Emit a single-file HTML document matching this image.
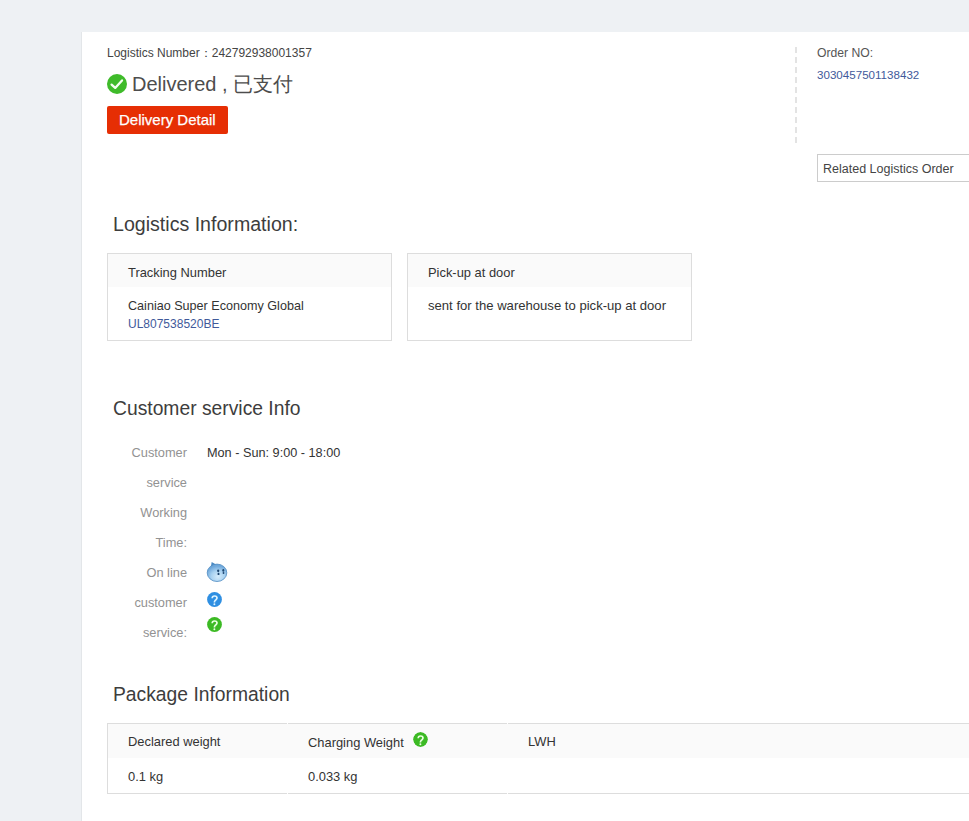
<!DOCTYPE html>
<html><head><meta charset="utf-8">
<style>
*{margin:0;padding:0;box-sizing:border-box}
html,body{width:969px;height:821px;overflow:hidden;background:#eef1f4;font-family:"Liberation Sans",sans-serif;color:#333}
.panel{position:absolute;left:82px;top:32px;width:900px;height:800px;background:#fff;box-shadow:-1px 0 0 #e3e6e9}
.a{position:absolute;white-space:nowrap;line-height:1}
.lnum{left:107px;top:47px;font-size:12px;color:#444}
.status{left:132px;top:74px;font-size:20px;color:#4d4d4d}
.chk{position:absolute;left:107px;top:74px;width:20px;height:20px;border-radius:50%;background:#3fbb2a}
.btn{position:absolute;left:107px;top:106px;width:121px;height:28px;border-radius:2px;background:#e62e04;color:#fff;font-size:15px;line-height:28px;padding-left:12px;-webkit-text-stroke:0.25px #fff;white-space:nowrap}
.dash{position:absolute;left:795px;top:47px;width:2px;height:97px;background:repeating-linear-gradient(to bottom,#e3e3e3 0 6px,transparent 6px 10px)}
.ordl{left:817px;top:47px;font-size:12.2px;color:#555}
.ordn{left:817px;top:69px;font-size:11.6px;color:#3f5a9b}
.rel{position:absolute;left:817px;top:154px;width:170px;height:28px;border:1px solid #ccc;font-size:12.5px;color:#444;line-height:28px;padding-left:5px;white-space:nowrap}
.h{font-size:19.3px;color:#3d3d3d}
.card{position:absolute;top:253px;width:285px;height:88px;border:1px solid #ddd}
.card .hd{height:33px;background:#fafafa;font-size:12.9px;padding:13px 0 0 20px;line-height:1}
.card .bd{font-size:12.6px;padding:10px 0 0 20px;line-height:18px}
.blue{color:#3f5a9b}
.lab{position:absolute;left:100px;width:87px;text-align:right;font-size:12.8px;color:#929292;line-height:1}
.val{font-size:12.7px;color:#333}
.tbl{position:absolute;left:107px;top:723px;width:900px;height:71px;border:1px solid #ddd;border-right:none}
.thd{position:absolute;left:0;top:0;width:100%;height:34px;background:#fafafa}
.brk{position:absolute;width:1px;height:1px;background:#fff;margin-top:-1px}
.tx{font-size:12.9px;color:#333}
.q{position:absolute;width:15px;height:15px;border-radius:50%}
</style></head><body>
<div class="panel"></div>

<div class="a lnum" id="lnum">Logistics Number：242792938001357</div>
<svg style="position:absolute;left:107px;top:74px" width="20" height="20" viewBox="0 0 20 20"><circle cx="10" cy="10" r="10" fill="#3fbb2a"/><path d="M4.6 10.6 L8.2 13.9 L15 6.4" fill="none" stroke="#f4fff0" stroke-width="2.3" stroke-linecap="round" stroke-linejoin="round"/></svg>
<div class="a status" id="status">Delivered , 已支付</div>
<div class="btn" id="btn">Delivery Detail</div>

<div class="dash"></div>
<div class="a ordl" id="ordl">Order NO:</div>
<div class="a ordn" id="ordn">3030457501138432</div>
<div class="rel" id="rel">Related Logistics Order</div>

<div class="a h" id="h1" style="left:113px;top:215px;font-size:19.6px">Logistics Information:</div>
<div class="card" style="left:107px">
  <div class="hd" id="c1h">Tracking Number</div>
  <div class="bd" id="c1b">Cainiao Super Economy Global<br><span class="blue" style="font-size:12px">UL807538520BE</span></div>
</div>
<div class="card" style="left:407px">
  <div class="hd" id="c2h">Pick-up at door</div>
  <div class="bd" id="c2b" style="font-size:13.1px">sent for the warehouse to pick-up at door</div>
</div>

<div class="a h" id="h2" style="left:113px;top:399px">Customer service Info</div>
<div class="lab" style="top:447px">Customer</div>
<div class="lab" style="top:477px">service</div>
<div class="lab" style="top:507px">Working</div>
<div class="lab" style="top:537px">Time:</div>
<div class="lab" style="top:567px">On line</div>
<div class="lab" style="top:597px">customer</div>
<div class="lab" style="top:627px">service:</div>
<div class="a val" id="val" style="left:207px;top:447px">Mon - Sun: 9:00 - 18:00</div>

<svg style="position:absolute;left:203px;top:558px" width="28" height="28" viewBox="0 0 28 28">
<defs><radialGradient id="ww" cx="0.55" cy="0.72" r="0.62"><stop offset="0" stop-color="#d4ebfb"/><stop offset="0.55" stop-color="#a9d2f1"/><stop offset="1" stop-color="#6ea7da"/></radialGradient></defs>
<path d="M7.8 9.2 L8.7 4 L13 6.6 Z" fill="#4a8ac4"/>
<ellipse cx="14" cy="14.8" rx="9.8" ry="8.7" fill="url(#ww)" stroke="#4f8cc2" stroke-width="0.8"/>
<ellipse cx="15.2" cy="12.8" rx="1.1" ry="1.4" fill="#1d4670"/><ellipse cx="15.5" cy="15.9" rx="1" ry="1.2" fill="#1d4670"/>
<ellipse cx="20.3" cy="12.4" rx="1" ry="1.3" fill="#1d4670"/><ellipse cx="20.5" cy="15" rx="0.9" ry="1.1" fill="#1d4670"/>
</svg>
<svg style="position:absolute;left:207px;top:592px" width="15" height="15" viewBox="0 0 15 15"><circle cx="7.5" cy="7.5" r="7.4" fill="#2f8fe2"/><path d="M5.2 6.2 C5.2 4.8 6.2 4 7.6 4 C9 4 10 4.9 10 6.1 C10 7.3 8.9 7.8 8.1 8.5 C7.6 9 7.4 9.5 7.4 10.6" fill="none" stroke="#dff4ff" stroke-width="1.7"/><circle cx="7.4" cy="12.2" r="1" fill="#dff4ff"/></svg>
<svg style="position:absolute;left:207px;top:617px" width="15" height="15" viewBox="0 0 15 15"><circle cx="7.5" cy="7.5" r="7.4" fill="#3cba24"/><path d="M5.2 6.2 C5.2 4.8 6.2 4 7.6 4 C9 4 10 4.9 10 6.1 C10 7.3 8.9 7.8 8.1 8.5 C7.6 9 7.4 9.5 7.4 10.6" fill="none" stroke="#eaffe0" stroke-width="1.7"/><circle cx="7.4" cy="12.2" r="1" fill="#eaffe0"/></svg>
<div class="a h" id="h3" style="left:113px;top:685px">Package Information</div>
<div class="tbl">
  <div class="thd"></div>
  <div class="brk" style="left:179px;top:0"></div><div class="brk" style="left:399px;top:0"></div>
  <div class="brk" style="left:179px;top:70px"></div><div class="brk" style="left:399px;top:70px"></div>
  <div class="a tx" style="left:20px;top:12px">Declared weight</div>
  <div class="a tx" style="left:200px;top:13px">Charging Weight</div>
  <div class="a tx" style="left:420px;top:12px">LWH</div>
  <div class="a tx" style="left:20px;top:47px">0.1 kg</div>
  <div class="a tx" style="left:200px;top:47px">0.033 kg</div>
  <svg class="q" style="left:305px;top:8px" width="15" height="15" viewBox="0 0 15 15"><circle cx="7.5" cy="7.5" r="7.4" fill="#3cba24"/><path d="M5.2 6.2 C5.2 4.8 6.2 4 7.6 4 C9 4 10 4.9 10 6.1 C10 7.3 8.9 7.8 8.1 8.5 C7.6 9 7.4 9.5 7.4 10.6" fill="none" stroke="#eaffe0" stroke-width="1.7"/><circle cx="7.4" cy="12.2" r="1" fill="#eaffe0"/></svg>
</div>
</body></html>
